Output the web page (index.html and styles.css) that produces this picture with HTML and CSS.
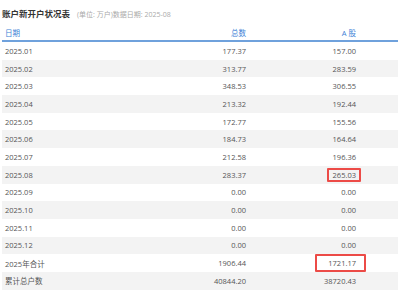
FILE: index.html
```html
<!DOCTYPE html>
<html lang="zh-CN">
<head>
    <meta charset="UTF-8">
    <title>账户新开户状况表</title>
    <link rel="stylesheet" href="styles.css">
</head>
<body>
    <div class="panel">
        <div class="title-bar">
            <h1>账户新开户状况表</h1>
            <span class="sub">(单位: 万户)数据日期: 2025-08</span>
        </div>
        <div class="grid">
            <div class="row head">
                <span class="left">日期</span>
                <span>总数</span>
                <span>A 股</span>
            </div>
            <div class="row"><span class="left">2025.01</span><span>177.37</span><span>157.00</span></div>
            <div class="row"><span class="left">2025.02</span><span>313.77</span><span>283.59</span></div>
            <div class="row"><span class="left">2025.03</span><span>348.53</span><span>306.55</span></div>
            <div class="row"><span class="left">2025.04</span><span>213.32</span><span>192.44</span></div>
            <div class="row"><span class="left">2025.05</span><span>172.77</span><span>155.56</span></div>
            <div class="row"><span class="left">2025.06</span><span>184.73</span><span>164.64</span></div>
            <div class="row"><span class="left">2025.07</span><span>212.58</span><span>196.36</span></div>
            <div class="row"><span class="left">2025.08</span><span>283.37</span><span><em class="mark">265.03</em></span></div>
            <div class="row"><span class="left">2025.09</span><span>0.00</span><span>0.00</span></div>
            <div class="row"><span class="left">2025.10</span><span>0.00</span><span>0.00</span></div>
            <div class="row"><span class="left">2025.11</span><span>0.00</span><span>0.00</span></div>
            <div class="row"><span class="left">2025.12</span><span>0.00</span><span>0.00</span></div>
            <div class="row"><span class="left">2025年合计</span><span>1906.44</span><span><em class="mark wide">1721.17</em></span></div>
            <div class="row"><span class="left">累计总户数</span><span>40844.20</span><span>38720.43</span></div>
        </div>
    </div>
</body>
</html>
```

FILE: styles.css
```css
body {
    margin: 0;
    background: #fff;
    font-family: "Open Sans", "Noto Sans CJK SC", sans-serif;
    color: #555;
}
.panel {
    padding: 7px 2px 0 2px;
}
.title-bar {
    display: flex;
    align-items: baseline;
    gap: 7px;
    height: 17px;
}
.title-bar h1 {
    margin: 0;
    font-size: 8.5px;
    font-weight: bold;
    color: #333;
    font-family: "Noto Sans CJK SC", sans-serif;
}
.title-bar .sub {
    font-size: 7px;
    color: #aaa;
}
.grid {
    font-size: 7.5px;
}
.row {
    display: grid;
    grid-template-columns: 148px 100px 110px 1fr;
    align-items: center;
    height: 17.7px;
}
.row span {
    text-align: right;
    padding-right: 4px;
}
.row .left {
    text-align: left;
    padding-left: 3px;
}
.row.head {
    height: 16px;
    color: #3d7fd6;
    border-bottom: 2px solid #6fa1dc;
}
.row:nth-child(odd) {
    background: #f3f3f3;
}
.row.head {
    background: none;
}
.mark {
    display: inline-block;
    font-style: normal;
    border: 2px solid #ec4b47;
    border-radius: 1px;
    padding: 0 3px 0 4px;
    margin-right: -5px;
    line-height: 10px;
}
.mark.wide {
    padding: 2px 8px 2px 11px;
    margin-right: -10px;
}
```
